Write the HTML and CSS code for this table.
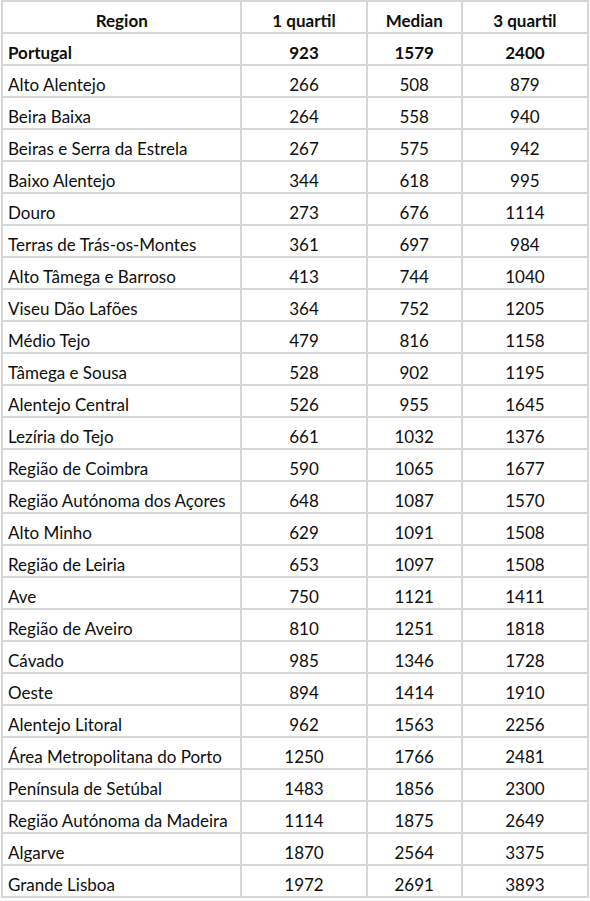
FILE: index.html
```html
<!DOCTYPE html>
<html lang="pt">
<head>
<meta charset="utf-8">
<title>Quartis por região</title>
<link rel="stylesheet" href="styles.css">
</head>
<body>
<table class="grid">
  <colgroup>
    <col class="c-region"><col class="c-q1"><col class="c-med"><col class="c-q3">
  </colgroup>
  <thead>
    <tr class="head"><th>Region</th><th>1 quartil</th><th>Median</th><th>3 quartil</th></tr>
  </thead>
  <tbody>
    <tr class="total"><td class="name">Portugal</td><td>923</td><td>1579</td><td>2400</td></tr>
    <tr><td class="name">Alto Alentejo</td><td>266</td><td>508</td><td>879</td></tr>
    <tr><td class="name">Beira Baixa</td><td>264</td><td>558</td><td>940</td></tr>
    <tr><td class="name">Beiras e Serra da Estrela</td><td>267</td><td>575</td><td>942</td></tr>
    <tr><td class="name">Baixo Alentejo</td><td>344</td><td>618</td><td>995</td></tr>
    <tr><td class="name">Douro</td><td>273</td><td>676</td><td>1114</td></tr>
    <tr><td class="name">Terras de Trás-os-Montes</td><td>361</td><td>697</td><td>984</td></tr>
    <tr><td class="name">Alto Tâmega e Barroso</td><td>413</td><td>744</td><td>1040</td></tr>
    <tr><td class="name">Viseu Dão Lafões</td><td>364</td><td>752</td><td>1205</td></tr>
    <tr><td class="name">Médio Tejo</td><td>479</td><td>816</td><td>1158</td></tr>
    <tr><td class="name">Tâmega e Sousa</td><td>528</td><td>902</td><td>1195</td></tr>
    <tr><td class="name">Alentejo Central</td><td>526</td><td>955</td><td>1645</td></tr>
    <tr><td class="name">Lezíria do Tejo</td><td>661</td><td>1032</td><td>1376</td></tr>
    <tr><td class="name">Região de Coimbra</td><td>590</td><td>1065</td><td>1677</td></tr>
    <tr><td class="name">Região Autónoma dos Açores</td><td>648</td><td>1087</td><td>1570</td></tr>
    <tr><td class="name">Alto Minho</td><td>629</td><td>1091</td><td>1508</td></tr>
    <tr><td class="name">Região de Leiria</td><td>653</td><td>1097</td><td>1508</td></tr>
    <tr><td class="name">Ave</td><td>750</td><td>1121</td><td>1411</td></tr>
    <tr><td class="name">Região de Aveiro</td><td>810</td><td>1251</td><td>1818</td></tr>
    <tr><td class="name">Cávado</td><td>985</td><td>1346</td><td>1728</td></tr>
    <tr><td class="name">Oeste</td><td>894</td><td>1414</td><td>1910</td></tr>
    <tr><td class="name">Alentejo Litoral</td><td>962</td><td>1563</td><td>2256</td></tr>
    <tr><td class="name">Área Metropolitana do Porto</td><td>1250</td><td>1766</td><td>2481</td></tr>
    <tr><td class="name">Península de Setúbal</td><td>1483</td><td>1856</td><td>2300</td></tr>
    <tr><td class="name">Região Autónoma da Madeira</td><td>1114</td><td>1875</td><td>2649</td></tr>
    <tr><td class="name">Algarve</td><td>1870</td><td>2564</td><td>3375</td></tr>
    <tr><td class="name">Grande Lisboa</td><td>1972</td><td>2691</td><td>3893</td></tr>
  </tbody>
</table>
</body>
</html>
```
FILE: styles.css
```css
html, body {
  margin: 0;
  padding: 0;
  background: #ffffff;
}
body {
  font-family: "Lato", "Liberation Sans", sans-serif;
  font-size: 17px;
  color: #0e0e0e;
}
.grid {
  margin-left: 1px;
  table-layout: fixed;
  border-collapse: separate;
  border-spacing: 2px;
  background: #d6d6d6;
  width: 588px;
}
.c-region { width: 237px; }
.c-q1 { width: 123px; }
.c-med { width: 93px; }
.c-q3 { width: 124px; }
.grid th,
.grid td {
  background: #ffffff;
  padding: 9px 5px 1px;
  line-height: 20px;
  height: 20px;
  text-align: center;
  white-space: nowrap;
  font-weight: 400;
}
.grid th {
  font-weight: 700;
}
.grid td.name {
  text-align: left;
}
.total td {
  font-weight: 700;
}
```
